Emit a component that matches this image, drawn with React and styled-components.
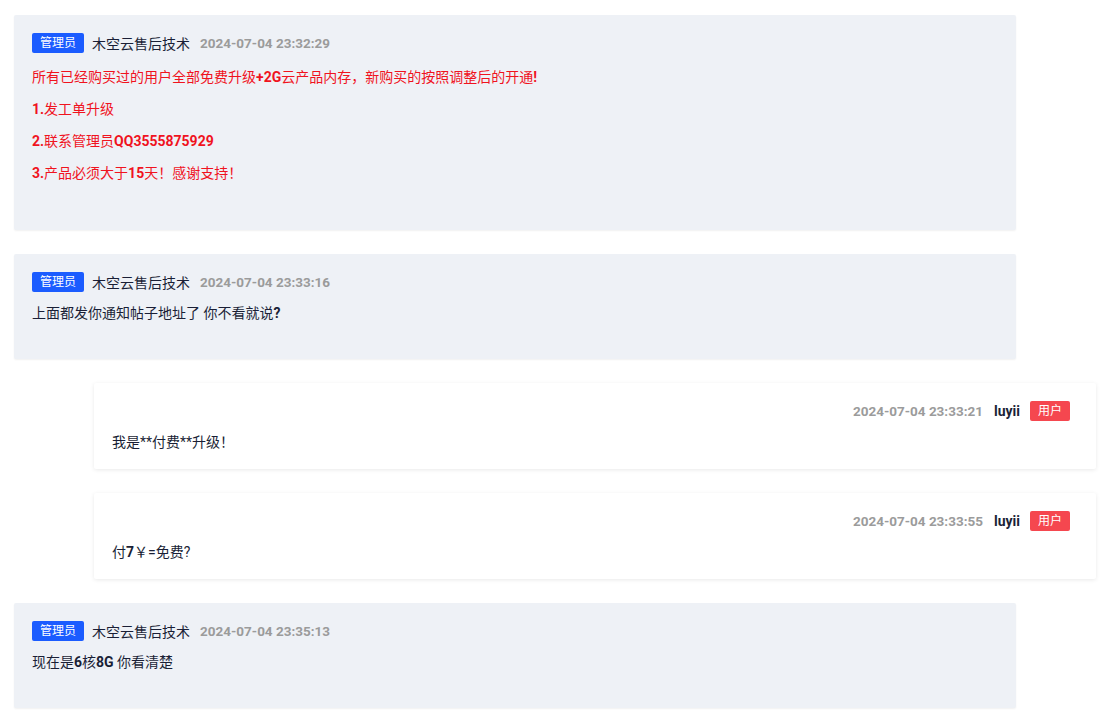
import styled, { createGlobalStyle } from "styled-components";

const GlobalStyle = createGlobalStyle`
  body {
    margin: 0;
    background: #ffffff;
    font-family: Roboto, "Noto Sans CJK SC", sans-serif;
  }
`;

const Thread = styled.div`
  display: flex;
  flex-direction: column;
  gap: 24px;
  padding: 15px 13px 11px 14px;
`;

const Card = styled.div`
  width: 1002px;
  box-sizing: border-box;
  margin-left: ${(p) => (p.$admin ? "0" : "80px")};
  padding: ${(p) => (p.$admin ? "18px 18px 25px" : "18px 26px 6px 18px")};
  background-color: ${(p) => (p.$admin ? "#eef1f6" : "#ffffff")};
  border-radius: 2px;
  box-shadow: ${(p) =>
    p.$admin
      ? "0px 1px 2px rgba(0, 0, 0, 0.06)"
      : "0px 1px 4px rgba(0, 0, 0, 0.09)"};
`;

const Header = styled.div`
  display: flex;
  align-items: center;
  justify-content: ${(p) => (p.$right ? "flex-end" : "flex-start")};
  height: 20px;
  margin-bottom: 10px;
`;

const Badge = styled.span`
  height: 20px;
  line-height: 20px;
  padding: 0 8px;
  border-radius: 2px;
  font-size: 12px;
  color: #ffffff;
  background-color: ${(p) => (p.$admin ? "#1b5cff" : "#f5474f")};
`;

const Name = styled.span`
  margin: ${(p) => (p.$user ? "0 10px 0 11px" : "0 10px 0 8px")};
  font-size: 14px;
  font-weight: ${(p) => (p.$user ? 700 : 400)};
  color: #1a1f36;
`;

const Time = styled.span`
  font-size: 13.5px;
  font-weight: 700;
  color: #9b9b9b;
`;

const Body = styled.div`
  padding-top: ${(p) => (p.$notice ? "3px" : "0")};
  padding-bottom: ${(p) => (p.$notice ? "11px" : "0")};
`;

const Line = styled.p`
  margin: 0 0 10px;
  font-size: 14px;
  line-height: 22px;
  color: ${(p) => (p.$red ? "#f0131e" : "#1a1f36")};
`;

const B = styled.b`
  font-weight: 700;
`;

const replies = [
  {
    admin: true,
    name: "木空云售后技术",
    time: "2024-07-04 23:32:29",
    notice: true,
    lines: [
      <>所有已经购买过的用户全部免费升级<B>+2G</B>云产品内存，新购买的按照调整后的开通<B>!</B></>,
      <><B>1.</B>发工单升级</>,
      <><B>2.</B>联系管理员<B>QQ3555875929</B></>,
      <><B>3.</B>产品必须大于<B>15</B>天！感谢支持！</>,
    ],
  },
  {
    admin: true,
    name: "木空云售后技术",
    time: "2024-07-04 23:33:16",
    lines: [<>上面都发你通知帖子地址了 你不看就说<B>?</B></>],
  },
  {
    admin: false,
    name: "luyii",
    time: "2024-07-04 23:33:21",
    lines: [<>我是**付费**升级！</>],
  },
  {
    admin: false,
    name: "luyii",
    time: "2024-07-04 23:33:55",
    lines: [<>付<B>7</B>￥=免费?</>],
  },
  {
    admin: true,
    name: "木空云售后技术",
    time: "2024-07-04 23:35:13",
    lines: [<>现在是<B>6</B>核<B>8G</B> 你看清楚</>],
  },
];

export default function App() {
  return (
    <>
      <GlobalStyle />
      <Thread>
        {replies.map((r, i) => (
          <Card key={i} $admin={r.admin}>
            {r.admin ? (
              <Header>
                <Badge $admin>管理员</Badge>
                <Name>{r.name}</Name>
                <Time>{r.time}</Time>
              </Header>
            ) : (
              <Header $right>
                <Time>{r.time}</Time>
                <Name $user>{r.name}</Name>
                <Badge>用户</Badge>
              </Header>
            )}
            <Body $notice={r.notice}>
              {r.lines.map((l, j) => (
                <Line key={j} $red={r.notice}>
                  {l}
                </Line>
              ))}
            </Body>
          </Card>
        ))}
      </Thread>
    </>
  );
}
